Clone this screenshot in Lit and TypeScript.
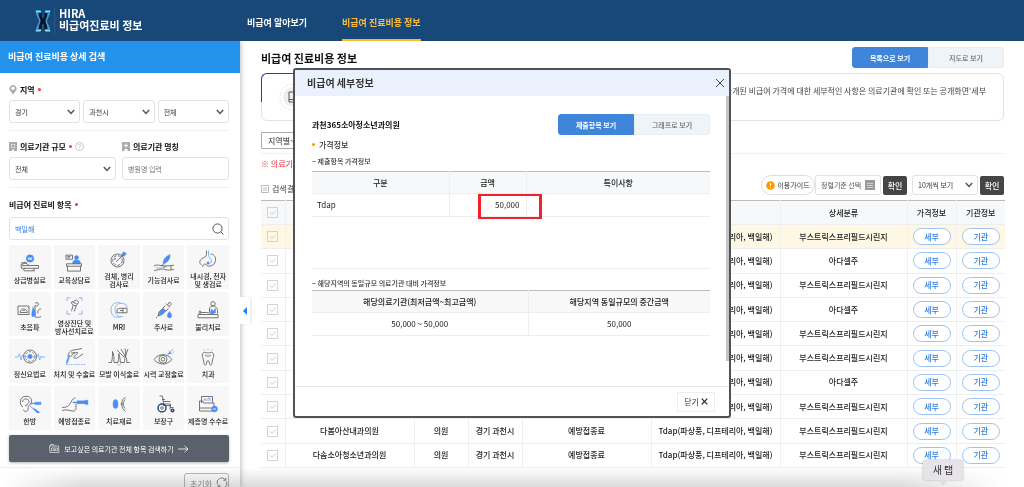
import { LitElement, html, css, svg, nothing } from "lit";
import { customElement, property } from "lit/decorators.js";
import { classMap } from "lit/directives/class-map.js";

const base = css`
  * { box-sizing: border-box; }
  button, input, select { font: inherit; color: inherit; margin: 0; padding: 0; border: 0; background: none; border-radius: 0; outline: 0; }
  button { cursor: pointer; }
  h1, h2, h3, p, ul { margin: 0; padding: 0; }
  svg { display: block; fill: none; }
  .select { display: grid; align-items: center; height: 23px; }
  .select > * { grid-area: 1 / 1; }
  .select select { appearance: none; width: 100%; height: 100%; border: 1px solid #e2e2e2; border-radius: 3px; padding: 0 5px; background: #fff; color: #333; font-size: 7px; }
  .select svg { justify-self: end; margin-right: 5px; pointer-events: none; }
  .toggle { display: flex; height: 21px; width: 152px; font-size: 7px; font-weight: 500; }
  .toggle button { flex: 1; background: #eff4f9; color: #666; border: 1px solid #e6edf3; border-radius: 0 3px 3px 0; }
  .toggle button.on { background: #3f86da; border-color: #3f86da; color: #fff; font-weight: 700; border-radius: 3px 0 0 3px; }
`;

const chevron = svg`<svg width="8" height="6" viewBox="0 0 8 6" stroke="#555" stroke-width="1.5"><path d="M.8 1 4 4.4 7.2 1"/></svg>`;

const tileIcons: Record<string, unknown> = {
  bed: svg`<circle class="b" cx="16" cy="4.5" r="3.8"/><path stroke="#fff" d="m14 3.4 1 2.4 1-2.2 1 2.2 1-2.4"/><path d="M7 10.5 12 9l3 2.5h9.5v2.8H7.5zM7 9.2l4-1 2 1M8 11.6h7M11 14.3l-2.5 2.4M21 14.3l-2 2.4M10 16.8h11"/>`,
  desk: svg`<circle class="b" cx="18.5" cy="3.5" r="2.1"/><path class="b" d="M14.5 9.5c0-3 2-3.8 4-3.8s4 1 4 3.8z"/><path d="M8 1.2h6.5v4H8zM9.5 2.5h3M9.5 3.8h2M8.5 9.8h15v2.4h-15zM9.5 12.2v4.9h13v-4.9"/>`,
  dish: svg`<circle cx="14.5" cy="10.5" r="6.5"/><circle cx="14.5" cy="10.5" r="4.8" stroke-dasharray="3 1.5"/><path d="m13 12 7-7"/><path class="b" d="m18.5 4.5 2.2-2.8 2.8 2-2.5 2.8z"/><circle class="b" cx="12" cy="9" r=".8"/>`,
  scalpel: svg`<path class="b" d="M15 9.5c0-4 3-7.5 7-9 .6 3.400-1.800 7.500-5.500 9z"/><path d="M15.500 9.500 14 12.500M6 12c3-2 4.500-.5 7-.5l6 .5 7-.8M6 16.500c4 0 6-2 9-1.500 3 1 7 1.500 11 .5M18 12.500l-3 1M23 11.500v4"/><path class="l" d="M8 14h6"/>`,
  stomach: svg`<path d="M14.500.5v4c0 2-3 3-5 4.500-2.500 2-2 5 0 6M18.500 4c3 0 5.500 2.500 5 6.500-.5 4-4 6-7 5.500-2-.4-2.500-2-4-2-1.500.2-1.500 2-2 3"/><path class="l" d="M16.500.5v5c0 2 3 3 3 5.500s-2 3-3.500 2.500"/><circle class="b" cx="16" cy="13" r="1.200"/>`,
  sono: svg`<path d="M4 5h11v8.500H4zM6 11.500c1-5 6-5 7.500 0zM8.500 9.500h2.500M21 2.500c1-1.500 3.500-1 3.500.6S22 6 21 4.500M21 4.500V12M27 8c-3 0-3.500 2-3 4.500M27 15.500c-2 1-4 1-6 .5"/><path class="b" d="M19 5.500c1 3 3.500 6 2.500 10h-3.500c-1-4 1-7 1-10z"/>`,
  scan: svg`<path class="l" d="M9 4V.8h3.500M20.500.8H24V4M24 13.500V17h-3.500M12.500 17H9v-3.500"/><path d="M13 5.500 18.500 3l2.200 2-2.500 4-3-.8zM15.200 8.200l-1.700 6M18.200 9l-2 5.500M15 5.500l3.500 1"/>`,
  mri: svg`<path class="l" d="M18 2.500c-5-2.500-10 .5-10 6.500s5 9 10 6.500M20 2.500c-5-1-8 2-8 6.500s3 7.500 8 6.500M20 2.500c3 .5 4 2 4 4"/><path d="M14 8.500c1-1 2.500-1.200 4-1.200h6v4.500H14zM17 9.500h3M20 7.300v4.500"/>`,
  dropper: svg`<path d="m18 2.500 4 4M19.500 4l2-3 2 2-2.500 2.500M17.500 4.500 11 11l-1 4 4-1.500 6.500-6M9.500 15.500l-1.500 1.500"/><path class="b" d="m11.500 10.800 4-3.500 2.500 2.500-4 3.500-3 1zM21.500 10.500c1.500 2 2.200 3 2.200 4.200a2.200 2.200 0 0 1-4.400 0c0-1.200.7-2.200 2.200-4.200z"/>`,
  physio: svg`<circle cx="21" cy="2.800" r="2.200"/><path d="M17.500 11V8c0-2 2-3 3.500-3s4.500 1 4.500 4.500v3M6 13.500h20v3.300H6zM8.500 11.500h6l7 1"/><circle cx="8" cy="11.300" r="1.200"/><path class="b" d="m19 8 2.500 2 2-3v5h-5z"/>`,
  mind: svg`<circle cx="16" cy="8.500" r="6.500"/><circle cx="16" cy="8.500" r="4.800" stroke-dasharray="2 1.500"/><circle class="b" cx="16" cy="8.500" r="2.200"/><path class="l" d="M1 9h3l1.500-3L7 12l1.500-5 1 2h4M18.500 9H23l1.200-3 1.500 6 1.500-4 .8 1h3"/>`,
  surgery: svg`<path d="M10 8.500c0-4 3-6.500 6-6.500 3-.5 5-1 8-1.500M12.500 9c2-3 4-4.500 7-4.500 0 2-2 2.500-3.500 4s1.500 2 3 1.500 3-2.500 6-4M13 5l4-.5"/><path class="b" d="M12 7.500 9.500 15l-1.500.5.5-2L11 7z"/><path class="l" stroke-dasharray="1.500 1" d="M8 16.500h19"/>`,
  hair: svg`<path d="M5.500 14.500h3c1-4 1-8 1-11 1.500 3 1.500 7 1.500 11h4c.8-4 .8-7 .8-9 1 3 1.500 6 1.500 9h4c.5-3 .5-5 1-7 1.500 3 1.500 5 1.500 7h3M14 2l7 7M18 1l4 7M22 .5l1 7M25 1l-3 8"/><path class="l" d="M14 15.500c1 2 3 2 4 0"/>`,
  eye: svg`<path d="M6 11.500c5-6.500 13-6.500 18 0-5 6-13 6-18 0z"/><circle cx="15" cy="11.300" r="4"/><circle cx="15" cy="11.300" r="1.800"/><path class="b" d="m19.500 6.500 2-2.500 1.500 1.500z"/><path class="l" d="m22 4.500 3-3.500M20.500 3l4 3M25 4.500l1.500-1"/>`,
  tooth: svg`<path d="M10.500 6c1-2.500 3.500-1.500 5.500-.8 2-.7 4.500-1.700 5.500.8 1 2.500-1 4.500-1.200 7-.2 2-.3 4-1.800 4s-.8-4.500-2.500-4.500S15 17 13.500 17s-1.600-2-1.800-4c-.2-2.500-2.200-4.500-1.200-7zM13 7c1.500 1.500 4.500 1.500 6 0"/><path class="l" d="m12.500 2.500-1-1M16 2V.5M19.500 2.500l1-1"/>`,
  ear: svg`<path d="M9 12C5 10 5 1.500 12 1.200c6 0 7 6 4 8.500-1.500 1.500-2 2-2 4.500 0 3-4 3-4.500.5M8.500 7c0-3.500 6-4.500 6.500-.5 0 2-1.500 1.500-2 3.500-.5 1.500-1.500 1-2 0"/><path class="b" d="M16 8h5v-.8h6v2.400h-6v-.8h-5zM15.500 10.500l4.500 3.500.7-.5 5 4-1.500 1.500-4.500-4.500z"/>`,
  vaccine: svg`<path d="M4 12.500c4 0 7-1 9-5.500 1.500-3 3-4 4.500-4M4 15.500c4-1 6-.5 9 .3s5 0 5-3.300V9"/><path class="b" d="M15 7h4V5.800h8V5l3 .5v4l-3-.2v-.6h-8V8h-4z"/>`,
  contact: svg`<ellipse class="b" cx="12.500" cy="9" rx="2.500" ry="4.500"/><path d="M22.500 2.500c-5 1-5 12 0 13.500M22.500 4.500c-3 2-3 7 0 9M17.500 9h2.500"/>`,
  wheel: svg`<path d="M11.500 1h3l1 8h7v3.500h3M14 4.500h3M15 6.500h7.500M15 10.500h7v4"/><circle class="d" cx="14" cy="13" r="4"/><circle cx="14" cy="13" r="1.300"/><circle class="d" cx="24.500" cy="15.500" r="1.300"/>`,
  folder: svg`<path d="M9.500 8V1.500h11V8M7.500 16V6h3l1.200 2H22v8zM7.500 13h12"/><path class="l" d="M12 6V4h2v2M16 6V3h2v3"/><circle class="b" cx="22.500" cy="14" r="3"/><path stroke="#fff" d="M21 14h3"/>`,
};

const tiles: [string, string[]][] = [
  ["bed", ["상급병실료"]], ["desk", ["교육상담료"]], ["dish", ["검체, 병리", "검사료"]], ["scalpel", ["기능검사료"]], ["stomach", ["내시경, 천자", "및 생검료"]],
  ["sono", ["초음파"]], ["scan", ["영상진단 및", "방사선치료료"]], ["mri", ["MRI"]], ["dropper", ["주사료"]], ["physio", ["물리치료"]],
  ["mind", ["정신요법료"]], ["surgery", ["처치 및 수술료"]], ["hair", ["모발 이식술료"]], ["eye", ["시력 교정술료"]], ["tooth", ["치과"]],
  ["ear", ["한방"]], ["vaccine", ["예방접종료"]], ["contact", ["치료재료"]], ["wheel", ["보장구"]], ["folder", ["제증명 수수료"]],
];

@customElement("site-header")
class SiteHeader extends LitElement {
  static styles = [base, css`
    :host { display: flex; height: 41px; background: #174878; color: #fff; flex: none; }
    .brand { display: flex; align-items: center; width: 247px; padding-left: 35px; font-size: 11px; line-height: 12px; font-weight: 700; color: #fff; text-decoration: none; }
    .brand span { border-left: 1px solid #2b5784; margin-left: 3px; padding: 0 0 4px 4px; white-space: nowrap; }
    nav { display: flex; gap: 35px; }
    nav a { color: #fff; text-decoration: none; font-size: 9px; font-weight: 700; line-height: 41px; padding-top: 2px; height: 41px; white-space: nowrap; }
    nav a.on { color: #fdbc3b; border-bottom: 2px solid #fdb92e; }
  `];
  render() {
    return html`
      <a class="brand" href="#">
        <svg width="16" height="24" viewBox="0 0 16 24">
          <path d="M3 1C3 7 6.500 8 6.500 12S3 17 3 23" stroke="#3f9bc9" stroke-width="5"/>
          <path d="M13 1c0 6-3.500 7-3.500 11s3.500 5 3.500 11" stroke="#3f9bc9" stroke-width="5"/>
          <path d="M5 4c0 4 2 5 2 8s-2 4-2 8M11 4c0 4-2 5-2 8s2 4 2 8" stroke="#06142c" stroke-width="3"/>
          <path d="M1 2.500h5M10 2.500h5M1 21.500h5M10 21.500h5" stroke="#8fdcf2"/>
        </svg>
        <span>HIRA<br>비급여진료비 정보</span>
      </a>
      <nav><a href="#">비급여 알아보기</a><a class="on" href="#">비급여 진료비용 정보</a></nav>`;
  }
}

@customElement("search-panel")
class SearchPanel extends LitElement {
  static styles = [base, css`
    :host { display: flex; flex-direction: column; position: relative; width: 240px; flex: none; background: #fff; box-shadow: 1px 0 5px rgba(0, 0, 0, .25); clip-path: inset(0 -12px 0 0); }
    .head { background: #2292ec; color: #fff; font-size: 9px; font-weight: 700; line-height: 32px; padding-left: 8px; }
    section { margin: 0 11px 0 9px; }
    section + section { border-top: 1px solid #f1f1f1; }
    .label { display: flex; align-items: center; gap: 3px; height: 12px; font-size: 8px; font-weight: 700; color: #111; white-space: nowrap; }
    .label i { width: 3px; height: 3px; border-radius: 50%; background: #f33; }
    .region { padding: 10px 0 7px; }
    .region .row { display: grid; grid-template-columns: repeat(3, 1fr); gap: 3px; margin-top: 5px; }
    .org { display: grid; grid-template-columns: 107px 1fr; gap: 5px 6px; padding: 9px 0 7px; }
    .field { width: 100%; height: 23px; border: 1px solid #e2e2e2; border-radius: 3px; padding: 0 5px; font-size: 7px; }
    .field::placeholder { color: #777; opacity: 1; }
    .items { padding: 10px 0 5px; }
    .find { display: grid; align-items: center; margin: 7px 0 5px; color: #2f80e0; }
    .find > * { grid-area: 1 / 1; }
    .find button { justify-self: end; margin-right: 5px; }
    .tiles { display: grid; grid-template-columns: repeat(5, 1fr); gap: 3px; }
    .tile { display: flex; flex-direction: column; align-items: center; justify-content: center; gap: 4px; height: 44px; padding-top: 3px; min-width: 0; background: #f7f7f7; font-size: 7px; line-height: 8px; font-weight: 500; color: #222; white-space: nowrap; }
    .tile svg { stroke: #555; stroke-width: .8; flex: none; }
    .tile .b { fill: #4c8df5; stroke: #4c8df5; stroke-width: .4; }
    .tile .l { stroke: #6ea5fa; }
    .tile .d { stroke: #27477f; stroke-width: 1.500; }
    .all { display: flex; align-items: center; justify-content: center; gap: 4px; width: 100%; height: 27px; margin-top: 5px; background: #5a606c; border-radius: 2px; color: #fff; font-size: 7px; box-shadow: 0 1px 3px rgba(0, 0, 0, .3); }
    .foot { border-top: 1px solid #eee; padding: 5px 11px 0; display: flex; justify-content: flex-end; }
    .reset { display: flex; align-items: center; gap: 4px; height: 20px; border: 1px solid #bbb; border-radius: 3px; font-size: 8px; color: #999; padding: 0 0 0 5px; background: #fff; white-space: nowrap; }
    .fold { position: absolute; left: 240px; top: 256px; width: 10px; height: 27px; background: #fff; box-shadow: 2px 0 3px rgba(0, 0, 0, .08); }
    .fold svg { margin: 0 auto; }
  `];
  render() {
    return html`
      <h2 class="head">비급여 진료비용 상세 검색</h2>
      <section class="region">
        <label class="label" for="sido">
          <svg width="8" height="11" viewBox="0 0 8 11"><path d="M4 10.500 1.200 6.800a3.500 3.500 0 1 1 5.600 0z" fill="#aaa"/><circle cx="4" cy="4.200" r="1.700" fill="#fff"/></svg>지역<i></i></label>
        <div class="row">
          <div class="select"><select id="sido"><option>경기</option></select>${chevron}</div>
          <div class="select"><select aria-label="시군구"><option>과천시</option></select>${chevron}</div>
          <div class="select"><select aria-label="읍면동"><option>전체</option></select>${chevron}</div>
        </div>
      </section>
      <section class="org">
        <label class="label" for="scale">
          <svg width="8" height="9" viewBox="0 0 8 9"><path d="M0 0h8v9H0z" fill="#aaa"/><path d="M2 2h1.200v1.200H2zM4.800 2H6v1.200H4.800zM2 4.500h1.200v1.200H2zM4.800 4.500H6v1.200H4.800zM3.300 7h1.400v2H3.300z" fill="#fff"/></svg>의료기관 규모<i></i>
          <svg width="9" height="9" viewBox="0 0 9 9" stroke="#bbb" stroke-width=".8"><circle cx="4.500" cy="4.500" r="4"/><path d="M3.200 3.600c.1-1.600 2.700-1.500 2.600 0C5.700 4.500 4.500 4.500 4.500 5.500M4.500 6.300v.8"/></svg></label>
        <label class="label" for="name">
          <svg width="8" height="9" viewBox="0 0 8 9"><path d="M0 0h8v9H0z" fill="#aaa"/><path d="M3.500 1.500h1V3H6v1H4.500v1.500h-1V4H2V3h1.500zM2.500 7h3v2h-3z" fill="#fff"/></svg>의료기관 명칭</label>
        <div class="select"><select id="scale"><option>전체</option></select>${chevron}</div>
        <input class="field" id="name" placeholder="병원명 입력">
      </section>
      <section class="items">
        <label class="label" for="item">비급여 진료비 항목<i></i></label>
        <div class="find"><input class="field" id="item" value="백일해">
          <button aria-label="검색"><svg width="12" height="12" viewBox="0 0 12 12" stroke="#555"><circle cx="5.500" cy="5.500" r="4.600"/><path d="m9 9 2.500 2.500"/></svg></button></div>
        <div class="tiles">${tiles.map(([icon, lines]) => html`
          <button class="tile"><svg width="32" height="18" viewBox="0 0 32 18">${tileIcons[icon]}</svg>
            <span>${lines.map((l, i) => html`${i ? html`<br>` : nothing}${l}`)}</span></button>`)}
        </div>
        <button class="all">
          <svg width="11" height="9" viewBox="0 0 11 9" stroke="#ddd" stroke-width=".8"><path d="M1 8.500.5 2h9L10 8.500zM1.500 2V.5h3L5.500 2M2.500 4h6v2.500h-6zM4 5.200h3"/></svg>
          보고싶은 의료기관 전체 항목 검색하기
          <svg width="11" height="8" viewBox="0 0 11 8" stroke="#eee" stroke-width=".9"><path d="M0 4h10M6.500.8 10 4 6.500 7.200"/></svg>
        </button>
      </section>
      <div class="foot"><button class="reset">초기화
        <svg width="12" height="12" viewBox="0 0 12 12" stroke="#888"><path d="M1.500 7.500A4.600 4.600 0 0 1 9.500 3M10.500 4.500A4.600 4.600 0 0 1 2.500 9M9.800.8V3.300H7.300M2.200 11.200V8.700h2.500"/></svg></button></div>
      <button class="fold" aria-label="접기"><svg width="4" height="8" viewBox="0 0 4 8"><path d="M4 0v8L0 4z" fill="#1a83f0"/></svg></button>`;
  }
}

interface Row { name?: string; kind?: string; area?: string; group?: string; detail: string; }
const BOOST = "부스트릭스프리필드시린지";
const ADA = "아다셀주";
const clinic = { kind: "의원", area: "경기 과천시", group: "예방접종료" };
const rows: Row[] = [
  ...[BOOST, ADA, BOOST, ADA, BOOST, BOOST, ADA, BOOST].map((detail) => ({ detail })),
  { ...clinic, name: "다봄아산내과의원", detail: BOOST },
  { ...clinic, name: "다솜소아청소년과의원", detail: BOOST },
];

@customElement("price-list")
class PriceList extends LitElement {
  static styles = [base, css`
    :host { display: block; flex: 1; min-width: 0; padding: 6px 20px 0 21px; color: #333; font-size: 8px; }
    .top { display: flex; justify-content: space-between; align-items: center; height: 21px; }
    h1 { font-size: 11px; line-height: 16px; font-weight: 700; color: #111; white-space: nowrap; }
    .info { position: relative; display: flex; justify-content: space-between; height: 48px; margin-top: 5px; padding: 9px 17px 0; border: 1px solid #dbe6ed; border-radius: 6px; white-space: nowrap; line-height: 16px; color: #444; }
    .info::before { content: ""; position: absolute; left: -1px; top: -1px; width: 200px; height: 28px; border: solid #234a80; border-width: 1px 0 0 1px; border-radius: 6px 0 0 0; }
    .filter { display: block; height: 17px; margin-top: 11px; padding: 0 6px; border: 1px solid #aaa; border-radius: 1px; line-height: 14px; white-space: nowrap; }
    .note { margin-top: 4px; border-top: 1px solid #f1f1f1; line-height: 14px; padding-top: 3px; color: #f0303a; }
    .bar { display: flex; align-items: center; height: 20px; margin-top: 4px; font-size: 7px; white-space: nowrap; }
    .found { display: flex; align-items: center; gap: 3px; flex: 1; padding-top: 7px; font-size: 8px; color: #444; }
    .guide { display: flex; align-items: center; gap: 2px; height: 20px; width: 54px; justify-content: center; border: 1px solid #ddd; border-radius: 10px; }
    .sort { display: flex; align-items: center; justify-content: space-between; width: 66px; height: 20px; padding: 0 5px; border: 1px solid #e2e2e2; border-radius: 2px; color: #555; }
    .ok { width: 24px; height: 19px; margin-left: 2px; background: #454545; color: #fff; border-radius: 2px; font-size: 8px; font-weight: 500; }
    .bar .select { width: 66px; height: 20px; margin-left: 5px; }
    table { width: 100%; height: 268px; margin-top: 5px; border-collapse: collapse; table-layout: fixed; border-top: 1px solid #bbb; border-bottom: 1px solid #ddd; font-weight: 500; color: #222; }
    th, td { padding: 0; text-align: center; white-space: nowrap; font-weight: 500; border-bottom: 1px solid #eee; border-left: 1px solid #f0f0f0; overflow: hidden; line-height: 12px; }
    th { background: #f6f8fa; height: 24px; }
    th:first-child, td:first-child { border-left: 0; }
    tr.on td { background: #fef7e4; }
    .c1 { width: 24px; } .c2 { width: 129px; } .c3, .c4 { width: 54px; } .c5, .c6 { width: 129px; } .c7 { width: 127px; } .c8 { width: 49px; } .c9 { width: 49px; }
    input[type="checkbox"] { appearance: none; display: block; width: 11px; height: 11px; margin: 0 auto; border: 1px solid #d3d3d3; background: url("data:image/svg+xml,%3Csvg xmlns='http://www.w3.org/2000/svg' viewBox='0 0 9 9' fill='none' stroke='%23ccc'%3E%3Cpath d='M2 4.500 4 6.500 7.500 2.800'/%3E%3C/svg%3E"); }
    .pill { display: block; width: 38px; height: 17px; margin: 0 auto; border: 1px solid #9cc3f2; border-radius: 9px; background: #fff; color: #2c7be0; font-weight: 500; line-height: 14px; }
  `];
  render() {
    return html`
      <div class="top"><h1>비급여 진료비용 정보</h1>
        <div class="toggle"><button class="on">목록으로 보기</button><button>지도로 보기</button></div></div>
      <div class="info">
        <svg width="28" height="28" viewBox="0 0 28 28"><circle cx="14" cy="14" r="13" stroke="#ccc" stroke-dasharray="1 2"/><circle cx="14" cy="14" r="10" fill="#eee"/><path d="M10 9h8v10h-8zM10 16.500h8" stroke="#555"/></svg>
        <p>공개된 비급여 가격에 대한 세부적인 사항은 의료기관에 확인 또는 공개화면'세부</p></div>
      <button class="filter">지역별~</button>
      <p class="note">※ 의료기관</p>
      <div class="bar">
        <span class="found"><svg width="8" height="8" viewBox="0 0 8 8" stroke="#bbb"><path d="M.5.500h7v7h-7zM2 3h4M2 5h4"/></svg>검색결과</span>
        <button class="guide"><svg width="9" height="9" viewBox="0 0 9 9"><circle cx="4.500" cy="4.500" r="4.300" fill="#f90"/><path d="M4.500 2v3M4.500 6v1" stroke="#fff"/></svg>이용가이드</button>
        <button class="sort">정렬기준 선택<svg width="10" height="10" viewBox="0 0 10 10"><path d="M0 0h10v10H0z" fill="#999"/><path d="M2 3.500h6M2 5.500h6M2 7.500h6" stroke="#ddd" stroke-width=".8"/></svg></button>
        <button class="ok">확인</button>
        <div class="select"><select aria-label="보기 개수"><option>10개씩 보기</option></select>${chevron}</div>
        <button class="ok">확인</button>
      </div>
      <table>
        <colgroup>${[1, 2, 3, 4, 5, 6, 7, 8, 9].map((n) => html`<col class="c${n}">`)}</colgroup>
        <thead><tr><th><input type="checkbox" aria-label="전체 선택"></th><th></th><th></th><th></th><th></th><th></th><th>상세분류</th><th>가격정보</th><th>기관정보</th></tr></thead>
        <tbody>${rows.map((r, i) => html`
          <tr class=${classMap({ on: i === 0 })}>
            <td><input type="checkbox" aria-label="선택"></td>
            <td>${r.name}</td><td>${r.kind}</td><td>${r.area}</td><td>${r.group}</td>
            <td>Tdap(파상풍, 디프테리아, 백일해)</td><td>${r.detail}</td>
            <td><button class="pill">세부</button></td><td><button class="pill">기관</button></td>
          </tr>`)}</tbody>
      </table>`;
  }
}

@customElement("price-dialog")
class PriceDialog extends LitElement {
  @property() name = "";
  static styles = [base, css`
    :host { display: flex; flex-direction: column; width: 438px; height: 350px; background: #fff; border: 2px solid #505257; border-radius: 3px; color: #333; font-size: 8px; overflow: hidden; }
    header { display: flex; justify-content: space-between; align-items: center; height: 26px; padding: 0 4px 0 12px; background: #eaf1fd; }
    h2 { font-size: 10px; line-height: 16px; font-weight: 700; }
    .body { flex: 1; padding: 18px 16px 0 17px; border: solid; border-image: linear-gradient(#c4c4c4 91%, #fff 91%) 1; border-width: 0 3px 0 0; }
    .title { display: flex; justify-content: space-between; align-items: center; height: 21px; }
    h3 { font-size: 8px; font-weight: 700; color: #111; }
    .price { display: flex; align-items: center; gap: 4px; height: 12px; margin-top: 3px; font-weight: 500; }
    .price::before { content: ""; width: 3px; height: 3px; border-radius: 50%; background: #f90; }
    .cap { font-size: 7px; line-height: 12px; font-weight: 500; }
    .first { margin-top: 5px; }
    .wrap { height: 98px; margin-top: 4px; border-bottom: 1px solid #eee; }
    .second { margin: 8px 0 1px; }
    table { width: 100%; border-collapse: collapse; table-layout: fixed; border-top: 1px solid #bbb; color: #222; }
    th, td { height: 23px; padding: 0; border-bottom: 1px solid #eee; text-align: center; font-weight: 500; line-height: 12px; }
    th { height: 22px; background: #f6f8fa; }
    td { font-weight: 400; }
    th + th, td + td { border-left: 1px solid #eee; }
    .item { text-align: left; padding-left: 5px; }
    .amount { position: relative; text-align: right; padding-right: 6px; }
    .amount::after { content: ""; position: absolute; z-index: 1; left: 28px; right: -16px; top: 0; height: 21px; border: solid #f0222c; border-width: 2px 3px; }
    .a { width: 137px; } .b { width: 77px; } .half { width: 216px; }
    footer { display: flex; justify-content: flex-end; align-items: center; height: 30px; padding: 0 14px; border-top: 1px solid #e6e6e6; }
    .close { display: flex; align-items: center; justify-content: center; gap: 2px; width: 38px; height: 20px; border: 1px solid #eee; }
  `];
  render() {
    return html`
      <header><h2>비급여 세부정보</h2>
        <button aria-label="닫기"><svg width="10" height="10" viewBox="0 0 10 10" stroke="#444"><path d="m1 1 8 8M9 1 1 9"/></svg></button></header>
      <div class="body">
        <div class="title"><h3>${this.name}</h3>
          <div class="toggle"><button class="on">제출항목 보기</button><button>그래프로 보기</button></div></div>
        <p class="price">가격정보</p>
        <p class="cap first">− 제출항목 가격정보</p>
        <div class="wrap"><table>
          <colgroup><col class="a"><col class="b"><col></colgroup>
          <tr><th>구분</th><th>금액</th><th>특이사항</th></tr>
          <tr><td class="item">Tdap</td><td class="amount">50,000</td><td></td></tr>
        </table></div>
        <p class="cap second">− 해당지역의 동일규모 의료기관 대비 가격정보</p>
        <table>
          <colgroup><col class="half"><col></colgroup>
          <tr><th>해당의료기관(최저금액~최고금액)</th><th>해당지역 동일규모의 중간금액</th></tr>
          <tr><td>50,000 ~ 50,000</td><td>50,000</td></tr>
        </table>
      </div>
      <footer><button class="close">닫기<svg width="7" height="7" viewBox="0 0 7 7" stroke="#222" stroke-width="1.200"><path d="m.7.700 5.600 5.600M6.300.700.7 6.300"/></svg></button></footer>`;
  }
}

@customElement("app-root")
class AppRoot extends LitElement {
  static styles = [base, css`
    :host { display: flex; flex-direction: column; position: relative; height: 100vh; overflow: hidden; background: #fff; font-family: "Noto Sans CJK KR", sans-serif; }
    .page { display: flex; flex: 1; min-height: 0; }
    .layer { position: absolute; inset: 0; display: flex; align-items: center; justify-content: center; padding-bottom: 1px; }
    .shade { position: absolute; left: 0; right: 0; bottom: 0; height: 20px; background: linear-gradient(90deg, #fff 0, transparent 8%, transparent 88%, #fff 98%), linear-gradient(transparent, rgba(0, 0, 0, .14)); mix-blend-mode: multiply; pointer-events: none; }
    .tip { position: absolute; right: 61px; bottom: 7px; width: 40px; height: 20px; border-radius: 3px; background: #e6e4e9; color: #333; font-size: 10px; line-height: 19px; text-align: center; box-shadow: 0 0 2px rgba(0, 0, 0, .35); }
    .tip::after { content: ""; position: absolute; left: 15px; top: 20px; border: solid transparent; border-width: 6px 5px 0; border-top-color: #e0dee3; }
  `];
  render() {
    return html`
      <site-header></site-header>
      <div class="page"><search-panel></search-panel><price-list></price-list></div>
      <div class="layer"><price-dialog role="dialog" name="과천365소아청소년과의원"></price-dialog></div>
      <div class="shade"></div>
      <div class="tip" role="tooltip">새 탭</div>`;
  }
}
